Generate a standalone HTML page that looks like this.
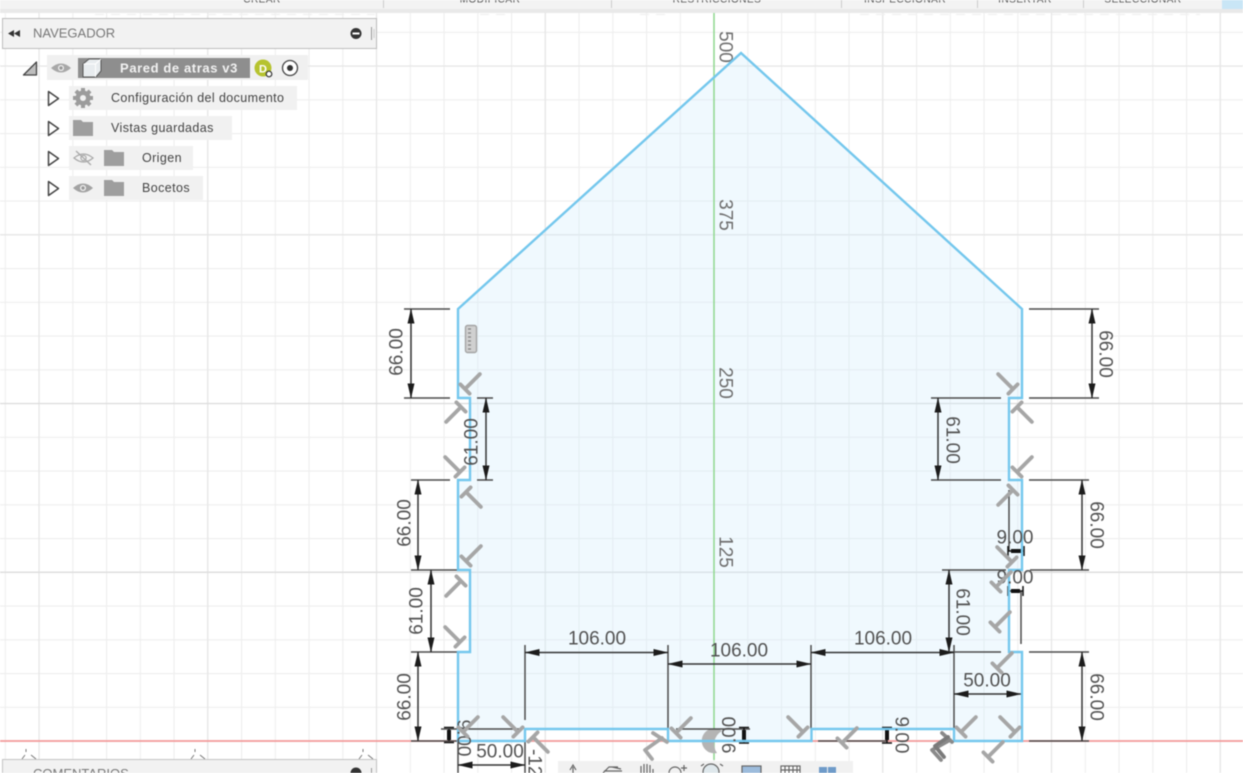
<!DOCTYPE html>
<html>
<head>
<meta charset="utf-8">
<style>
html,body{margin:0;padding:0;width:1243px;height:773px;overflow:hidden;background:#fff}
body{position:relative;font-family:"Liberation Sans",sans-serif}
svg{position:absolute;left:0;top:0;filter:blur(.45px)}
.dim{font-family:"Liberation Sans",sans-serif;font-size:19px;fill:#525252;text-anchor:middle;dominant-baseline:central}
.ax{font-family:"Liberation Sans",sans-serif;font-size:19px;fill:#6e6e6e;text-anchor:middle;dominant-baseline:central}
.tb{font-family:"Liberation Sans",sans-serif;font-size:10px;fill:#555;text-anchor:middle;letter-spacing:.5px}
.tree{font-family:"Liberation Sans",sans-serif;font-size:12.5px;fill:#444;letter-spacing:.4px}
</style>
</head>
<body>
<svg width="1243" height="773" viewBox="0 0 1243 773" xmlns="http://www.w3.org/2000/svg">
<defs>
<pattern id="minor" x="4.75" y="-2" width="33.75" height="33.75" patternUnits="userSpaceOnUse">
<path d="M0.5 0V33.75M0 0.5H33.75" stroke="#eeeeee" stroke-width="1.2" fill="none"/>
</pattern>
<marker id="a" viewBox="0 0 15 7" refX="14.5" refY="3.5" markerWidth="15" markerHeight="7" markerUnits="userSpaceOnUse" orient="auto-start-reverse">
<path d="M15 3.5L0 0V7Z" fill="#1c1c1c"/>
</marker>
<g id="t" fill="none" stroke="#a6a6a6" stroke-width="3.8" stroke-linecap="round">
<path d="M0 -6.5V6.5M0 0H21"/>
</g>
</defs>

<!-- grid -->
<rect x="0" y="13" width="1243" height="760" fill="url(#minor)"/>
<g stroke="#e6e6e6" stroke-width="1.2" fill="none">
<path d="M0 66H1243M0 234.750H1243"/>
<path d="M39 13V773M207.750 13V773M376.500 13V773M545.250 13V773M882.750 13V773M1051.500 13V773M1220.250 13V773"/>
</g>
<path d="M0 403.500H1243M0 572.250H1243" stroke="#dcdcdc" stroke-width="1.300"/>

<!-- faint clipped label row -->
<path d="M95 14.500H375M480 14.500H510M640 14.500H670M860 14.500H1200" stroke="#f0f0f0" stroke-width="1.200" stroke-dasharray="9 7"/>

<!-- profile fill + axes -->
<path d="M458 309L741 53L1022 309V398H1009V480H1022V570H1009V652H1022V741H954V729H811.500V741H668V729H525V741H458V652H470V570H458V480H470V398H458Z" fill="#d0ecfb" fill-opacity=".33"/>
<path d="M0 741H1243" stroke="#f29a9a" stroke-width="1.800"/>
<path d="M714 13V760" stroke="#8fd88f" stroke-width="1.500"/>

<!-- axis labels -->
<text class="ax" transform="translate(725,47) rotate(90)">500</text>
<text class="ax" transform="translate(725,215) rotate(90)">375</text>
<text class="ax" transform="translate(725,383) rotate(90)">250</text>
<text class="ax" transform="translate(725,552) rotate(90)">125</text>

<!-- origin circle -->
<path d="M722 731A12.500 12.500 0 1 0 717 753A15 15 0 0 1 722 731Z" fill="#b4b4b4"/>

<!-- extension lines -->
<g stroke="#4c4c4c" stroke-width="1.500" fill="none">
<path d="M404 309H450M404 398H450M477 398H493M477 480H493M411 480H450M411 570H458M411 652H458M411 741H458"/>
<path d="M1029 309H1099M1029 398H1099M931 398H1001M931 480H1001M1029 480H1089M942 570H1006M1030 570H1089M1029 652H1089M1029 741H1089M940 652H1001"/>
<path d="M525 645V720M668 645V729M811 645V729M954 645V729M458 741V773M525 741V773"/>
<path d="M441 729H520M676 729H750M818 741H887M1009 490V551M1021 591V644"/>
</g>

<!-- dimension arrows -->
<g stroke="#333" stroke-width="1.500" fill="none">
<path d="M411 309V398" marker-start="url(#a)" marker-end="url(#a)"/>
<path d="M486 398V480" marker-start="url(#a)" marker-end="url(#a)"/>
<path d="M418 480V570" marker-start="url(#a)" marker-end="url(#a)"/>
<path d="M431 570V652" marker-start="url(#a)" marker-end="url(#a)"/>
<path d="M418 652V741" marker-start="url(#a)" marker-end="url(#a)"/>
<path d="M458 765H525" marker-start="url(#a)" marker-end="url(#a)"/>
<path d="M525 652.500H668" marker-start="url(#a)" marker-end="url(#a)"/>
<path d="M668 664H811" marker-start="url(#a)" marker-end="url(#a)"/>
<path d="M811 652.500H954" marker-start="url(#a)" marker-end="url(#a)"/>
<path d="M954 694H1021" marker-start="url(#a)" marker-end="url(#a)"/>
<path d="M1092 309V398" marker-start="url(#a)" marker-end="url(#a)"/>
<path d="M938 398V480" marker-start="url(#a)" marker-end="url(#a)"/>
<path d="M1082 480V570" marker-start="url(#a)" marker-end="url(#a)"/>
<path d="M949 570V652" marker-start="url(#a)" marker-end="url(#a)"/>
<path d="M1082 652V741" marker-start="url(#a)" marker-end="url(#a)"/>
</g>
<g stroke="#111" fill="none">
<path d="M449 729V741M444 727.500H454M444 742.500H454" stroke-width="1.500"/>
<path d="M449 730V740" stroke-width="4"/>
<path d="M744 727.500V743M739 727.500H749M739 743H749" stroke-width="1.500"/>
<path d="M744 730V740" stroke-width="4"/>
<path d="M887 727.500V743M882 727.500H892M882 743H892" stroke-width="1.500"/>
<path d="M887 730V740" stroke-width="4"/>
<path d="M1008 551H1024M1008 546V556M1024 546V556" stroke-width="1.500"/>
<path d="M1011 551H1021" stroke-width="4"/>
<path d="M1008 591H1023M1008 586V596M1023 586V596" stroke-width="1.500"/>
<path d="M1011 591H1020" stroke-width="4"/>
</g>

<!-- outline -->
<path d="M458 309L741 53L1022 309V398H1009V480H1022V570H1009V652H1022V741H954V729H811.500V741H668V729H525V741H458V652H470V570H458V480H470V398H458Z" fill="none" stroke="#74c7ed" stroke-width="2.400" stroke-linejoin="miter"/>

<!-- dimension text -->
<g>
<text class="dim" transform="translate(397,352) rotate(-90)">66.00</text>
<text class="dim" transform="translate(472,442) rotate(-90)">61.00</text>
<text class="dim" transform="translate(405,523) rotate(-90)">66.00</text>
<text class="dim" transform="translate(417,611) rotate(-90)">61.00</text>
<text class="dim" transform="translate(405,697) rotate(-90)">66.00</text>
<text class="dim" transform="translate(463,738) rotate(90)">9.00</text>
<text class="dim" x="500" y="752">50.00</text>
<text class="dim" transform="translate(534,768) rotate(90)">-125</text>
<text class="dim" x="597" y="639">106.00</text>
<text class="dim" x="739" y="651">106.00</text>
<text class="dim" x="883" y="639">106.00</text>
<text class="dim" transform="translate(730,735) rotate(-90)">9.00</text>
<text class="dim" transform="translate(901,735) rotate(90)">9.00</text>
<text class="dim" transform="translate(1105,354) rotate(90)">66.00</text>
<text class="dim" transform="translate(952,440) rotate(90)">61.00</text>
<text class="dim" transform="translate(1096,525) rotate(90)">66.00</text>
<text class="dim" transform="translate(962,612) rotate(90)">61.00</text>
<text class="dim" transform="translate(1096,697) rotate(90)">66.00</text>
<text class="dim" x="987" y="681">50.00</text>
<text class="dim" x="1015" y="538">9.00</text>
<text class="dim" x="1015" y="578">9.00</text>
</g>

<!-- constraint glyphs -->
<g>
<use href="#t" transform="translate(465,389) rotate(-45)"/>
<use href="#t" transform="translate(461,407) rotate(135)"/>
<use href="#t" transform="translate(460,472) rotate(-135)"/>
<use href="#t" transform="translate(466,492) rotate(45)"/>
<use href="#t" transform="translate(466,561) rotate(-45)"/>
<use href="#t" transform="translate(461,581) rotate(135)"/>
<use href="#t" transform="translate(460,642) rotate(-135)"/>
<use href="#t" transform="translate(463,732) rotate(-45)"/>
<use href="#t" transform="translate(518,732) rotate(-135)"/>
<use href="#t" transform="translate(533,737) rotate(45)"/>
<use href="#t" transform="translate(676,733) rotate(-45)"/>
<use href="#t" transform="translate(803,732) rotate(-135)"/>
<use href="#t" transform="translate(842,743) rotate(-45)"/>
<use href="#t" transform="translate(961,732) rotate(-45)"/>
<use href="#t" transform="translate(1015,732) rotate(-135)"/>
<use href="#t" transform="translate(988,757) rotate(-45)"/>
<use href="#t" transform="translate(1012,562) rotate(-135)"/>
<use href="#t" transform="translate(996,587) rotate(-45)"/>
<use href="#t" transform="translate(995,627) rotate(-45)"/>
<use href="#t" transform="translate(997,668) rotate(-45)"/>
<use href="#t" transform="translate(1013,389) rotate(-135)"/>
<use href="#t" transform="translate(1017,407) rotate(45)"/>
<use href="#t" transform="translate(1017,472) rotate(-45)"/>
<use href="#t" transform="translate(1013,490) rotate(135)"/>
</g>
<g fill="none" stroke-linecap="round" stroke-linejoin="round" stroke-width="3.800">
<path d="M653 733L667 742M662 738L645 750L652 759" stroke="#a6a6a6"/>
<path d="M942 733L952 742M950 740L932 750L941 760" stroke="#8a8a8a"/>
<path d="M948 737L935 746L944 757" stroke="#7a7a7a"/>
</g>

<!-- ruler icon -->
<rect x="465.500" y="325.500" width="11" height="27" rx="2" fill="#d0d0d0" stroke="#a4a4a4" stroke-width="1.400"/>
<path d="M468 329h3M468 333h3M468 337h3M468 341h3M468 345h3M468 349h3" stroke="#808080" stroke-width="1.300"/>

<!-- top toolbar -->
<rect x="0" y="0" width="1243" height="9" fill="#f3f3f3"/>
<rect x="0" y="9" width="1243" height="4" fill="#e9e9e9"/>
<rect x="1222" y="0" width="21" height="9" fill="#c9e6f6"/>
<path d="M383.500 0V8M611.500 0V8M841.500 0V8M977.500 0V8M1083.500 0V8" stroke="#ccc"/>
<text class="tb" x="262" y="2.500">CREAR</text>
<text class="tb" x="490" y="2.500">MODIFICAR</text>
<text class="tb" x="717" y="2.500">RESTRICCIONES</text>
<text class="tb" x="905" y="2.500">INSPECCIONAR</text>
<text class="tb" x="1025" y="2.500">INSERTAR</text>
<text class="tb" x="1143" y="2.500">SELECCIONAR</text>

<!-- navigator panel -->
<rect x="2.500" y="18.500" width="374" height="30" fill="#f2f2f2" stroke="#bdbdbd"/>
<path d="M8 33.500L14 30V37ZM14 33.500L20 30V37Z" fill="#333"/>
<text x="33" y="37.500" font-family="Liberation Sans" font-size="13" fill="#777">NAVEGADOR</text>
<circle cx="356" cy="33.500" r="5.500" fill="#333"/>
<rect x="352.500" y="32.500" width="7" height="2" fill="#fff"/>
<path d="M371.500 27V40" stroke="#999"/><path d="M374 29V38" stroke="#ccc"/>

<!-- tree row 0 -->
<rect x="47" y="55" width="261" height="25" fill="#f0f0f0"/>
<path d="M23.500 75H36.500V62Z" fill="#bdbdbd" stroke="#444" stroke-width="1.300" stroke-linejoin="round"/>
<path d="M51 68Q61 59 71 68Q61 77 51 68Z" fill="#a8a8a8"/><circle cx="61" cy="68" r="3" fill="#f0f0f0"/><circle cx="61" cy="68" r="1.700" fill="#999"/>
<rect x="78" y="58" width="172" height="20" fill="#8e8e8e"/>
<path d="M83 64L89 59H101V71L96 77H83Z" fill="#e8ecef" stroke="#555" stroke-width="1"/>
<path d="M83.500 64H95.500V77" fill="none" stroke="#fff" stroke-width="1"/>
<path d="M95.500 64L101 59" stroke="#fff" stroke-width="1"/>
<text x="179" y="72.500" font-family="Liberation Sans" font-size="13" font-weight="bold" fill="#f2f2f2" text-anchor="middle" letter-spacing=".6">Pared de atras v3</text>
<circle cx="263" cy="68" r="8.500" fill="#b6c32f"/>
<text x="263" y="72.500" font-family="Liberation Sans" font-size="11" font-weight="bold" fill="#fff" text-anchor="middle">D</text>
<circle cx="269" cy="74" r="2.800" fill="#fff" stroke="#333" stroke-width="1.200"/>
<circle cx="290" cy="68" r="7.500" fill="#fff" stroke="#444" stroke-width="1.300"/>
<circle cx="290" cy="68" r="3" fill="#333"/>

<!-- rows -->
<rect x="69" y="86" width="228" height="24" fill="#f1f1f1"/>
<rect x="69" y="116" width="163" height="24" fill="#f1f1f1"/>
<rect x="69" y="146" width="124" height="24" fill="#f1f1f1"/>
<rect x="69" y="176" width="134" height="24" fill="#f1f1f1"/>
<g fill="#fff" stroke="#444" stroke-width="1.500" stroke-linejoin="round">
<path d="M48.500 91.500L58.500 98.500L48.500 105.500Z"/>
<path d="M48.500 121.500L58.500 128.500L48.500 135.500Z"/>
<path d="M48.500 151.500L58.500 158.500L48.500 165.500Z"/>
<path d="M48.500 181.500L58.500 188.500L48.500 195.500Z"/>
</g>
<!-- gear -->
<g fill="#9c9c9c">
<circle cx="83" cy="98" r="7.500"/>
<path d="M81 88h4v4h-4zM81 104h4v4h-4zM73 96h4v4h-4zM89 96h4v4h-4z"/>
<path d="M81 88h4v4h-4zM81 104h4v4h-4zM73 96h4v4h-4zM89 96h4v4h-4z" transform="rotate(45 83 98)"/>
</g>
<circle cx="83" cy="98" r="3" fill="#f1f1f1"/>
<!-- folders -->
<path d="M73 120H81L83 122H93V136H73Z" fill="#9e9e9e"/>
<path d="M104 150H112L114 152H124V166H104Z" fill="#9e9e9e"/>
<path d="M104 180H112L114 182H124V196H104Z" fill="#9e9e9e"/>
<!-- eyes -->
<path d="M74 158Q83.500 150 93 158Q83.500 166 74 158Z" fill="none" stroke="#aaa" stroke-width="1.300"/>
<circle cx="83.500" cy="158" r="2.600" fill="none" stroke="#aaa" stroke-width="1.200"/>
<path d="M76 151L91 165" stroke="#aaa" stroke-width="1.300"/>
<path d="M73 188Q83 179 93 188Q83 197 73 188Z" fill="#a3a3a3"/><circle cx="83" cy="188" r="3" fill="#f1f1f1"/><circle cx="83" cy="188" r="1.700" fill="#999"/>
<text class="tree" x="111" y="102">Configuración del documento</text>
<text class="tree" x="111" y="132">Vistas guardadas</text>
<text class="tree" x="142" y="162">Origen</text>
<text class="tree" x="142" y="192">Bocetos</text>

<!-- small bottom markers -->
<g fill="none" stroke="#777" stroke-width="1">
<path d="M26 749V752M22 759L25 755M31 755L36 759"/>
<path d="M195 749V752M191 759L194 755M200 755L205 759"/>
<path d="M363 749V752M359 759L362 755M368 755L373 759"/>
</g>

<!-- comments panel -->
<rect x="2.500" y="759.500" width="374" height="20" fill="#f2f2f2" stroke="#c4c4c4"/>
<text x="33" y="778" font-family="Liberation Sans" font-size="13" fill="#777">COMENTARIOS</text>
<circle cx="356" cy="773" r="5.500" fill="#333"/>
<path d="M371.500 768V773" stroke="#999"/>

<!-- bottom toolbar -->
<rect x="558" y="761" width="295" height="12" fill="#f1f1f1"/>
<g fill="none" stroke="#666" stroke-width="1.200">
<path d="M570 770L573 765L576 770M573 767V773"/>
<path d="M603 773L609 767H618M604 771H622M612 767L621 769"/>
<path d="M641 773V766M644 773V764M647 773V764M650 773V765M653 773V769"/>
<circle cx="675" cy="773" r="6"/><path d="M684 765V771M681 768H687"/>
<circle cx="711" cy="772" r="8" fill="#dfe8ec"/><path d="M701 766l3-2M720 764l3 2"/>
<rect x="742" y="766" width="19" height="12" fill="#9dbcdc" stroke="#666"/>
<rect x="781" y="766" width="19" height="10" fill="#fff"/>
<path d="M785 766V773M789 766V773M793 766V773M797 766V773M781 770H800"/>
</g>
<rect x="819" y="767" width="8" height="8" fill="#6f9bc9"/>
<rect x="828" y="767" width="8" height="8" fill="#6f9bc9"/>
</svg>
</body>
</html>
